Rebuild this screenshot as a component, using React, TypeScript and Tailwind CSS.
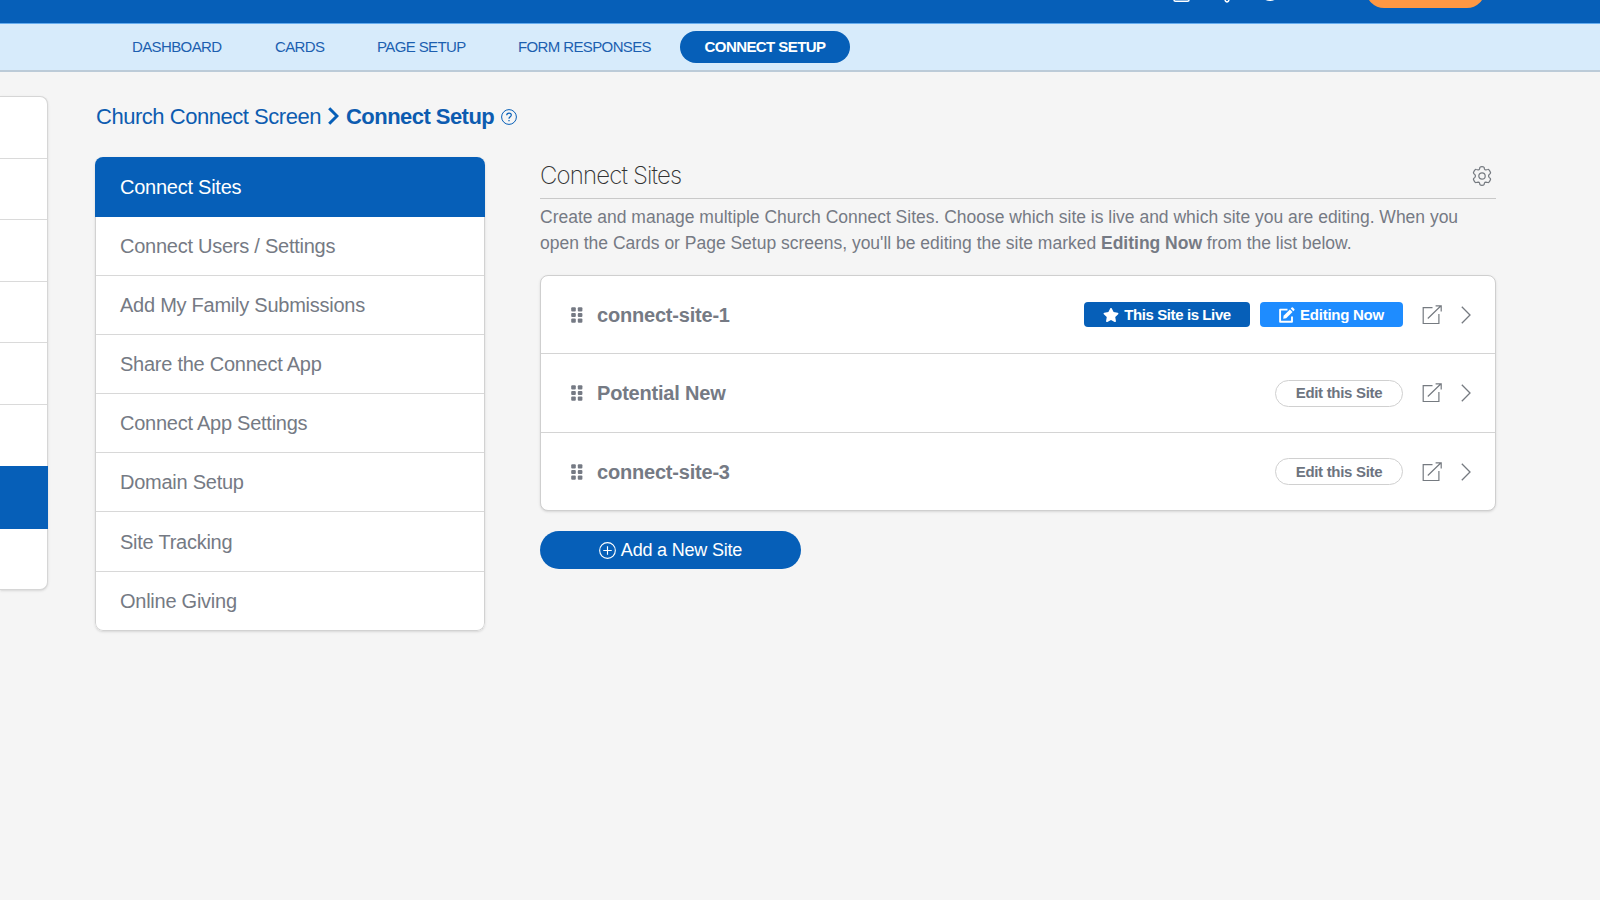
import { FaStar } from 'react-icons/fa';

const NAV_ITEMS = [
  { label: 'DASHBOARD', className: 'w-[90px] mr-[53px]' },
  { label: 'CARDS', className: 'w-[50px] mr-[52px]' },
  { label: 'PAGE SETUP', className: 'w-[89px] mr-[52px]' },
  { label: 'FORM RESPONSES', className: 'w-[133px] mr-[29px]' },
];

const MENU_ITEMS = [
  'Connect Users / Settings',
  'Add My Family Submissions',
  'Share the Connect App',
  'Connect App Settings',
  'Domain Setup',
  'Site Tracking',
  'Online Giving',
];

const SITES = [
  { name: 'connect-site-1', live: true },
  { name: 'Potential New', live: false },
  { name: 'connect-site-3', live: false },
];

function GripIcon() {
  return (
    <svg className="w-3 h-4 shrink-0" viewBox="0 0 12 16" fill="#757a84">
      {[0.2, 5.9, 11.6].map((y) => (
        <g key={y}>
          <rect x="0.2" y={y} width="4.6" height="4.2" rx="1" />
          <rect x="6.8" y={y} width="4.6" height="4.2" rx="1" />
        </g>
      ))}
    </svg>
  );
}

function EditIcon() {
  return (
    <svg className="w-4 h-4 shrink-0" viewBox="0 0 16 16">
      <path d="M8.5 2.600H1.100V14.800H13V9.500" fill="none" stroke="#fff" strokeWidth="1.900" strokeLinejoin="round" />
      <path d="M4.600 8.700 10.900 2.400 13.500 5 7.200 11.300 4.200 11.700z" fill="#fff" />
      <path d="M11.700 1.600 12.700 .6Q13.300 0 13.900 .6L15.300 2Q15.900 2.600 15.300 3.200L14.300 4.200z" fill="#fff" />
    </svg>
  );
}

function ExternalIcon() {
  return (
    <svg className="w-5 h-5 shrink-0" viewBox="0 0 20 20" fill="none" stroke="#757a80" strokeWidth="1.2">
      <path d="M10.500 2.700H1.200v15.800h15.700V8.900M5.800 13.500 19 .8M13.600 .8H19.200V6.400" />
    </svg>
  );
}

function ChevronIcon() {
  return (
    <svg className="w-2.5 h-[18px] shrink-0" viewBox="0 0 10 18" fill="none" stroke="#757a80" strokeWidth="1.3">
      <path d="M.8 .8 9 9 .8 17.2" />
    </svg>
  );
}

function GearIcon() {
  return (
    <svg className="w-5 h-5" viewBox="0 0 20 20" fill="none" stroke="#757a80" strokeWidth="1.2" strokeLinejoin="round">
      <circle cx="10" cy="10" r="3.2" />
      <path d="M7.900 1.500Q8 .9 8.700 .8 10 .6 11.300 .8 12 .9 12.100 1.500L12.500 3.100Q12.800 3.900 13.800 3.900L15.800 3.500Q16.600 3.300 17 3.900 18 5.100 18.500 6.500 18.700 7.100 18.200 7.600L17.100 8.700Q16.100 10 17.100 11.300L18.200 12.400Q18.700 12.900 18.500 13.500 18 14.900 17 16.100 16.600 16.700 15.800 16.500L13.800 16.100Q12.800 16.100 12.500 16.900L12.100 18.500Q12 19.100 11.300 19.200 10 19.400 8.700 19.200 8 19.100 7.900 18.500L7.500 16.900Q7.200 16.100 6.200 16.100L4.200 16.500Q3.400 16.700 3 16.100 2 14.900 1.500 13.500 1.300 12.900 1.800 12.400L2.900 11.300Q3.900 10 2.900 8.700L1.800 7.600Q1.300 7.100 1.500 6.500 2 5.100 3 3.900 3.400 3.300 4.200 3.500L6.200 3.900Q7.200 3.900 7.500 3.100z" />
    </svg>
  );
}

export default function App() {
  return (
    <div className="h-[900px] w-full overflow-hidden bg-[#f5f5f5] font-['Liberation_Sans',Arial,sans-serif] text-[#757a84]">
      <header className="flex h-6 justify-end overflow-hidden bg-[#065fb8] border-b border-[#65adf0] pr-[115px]">
        <svg className="w-[112px] h-2 mr-[81px]" viewBox="0 0 112 8" fill="none" stroke="#fff" strokeWidth="1.5">
          <path d="M1 -6V0Q1 1.200 2.500 1.200H14.500Q16 1.200 16 0V-6" />
          <path d="M52.500 -1a1.800 1.800 0 1 0 3 0" />
          <path d="M90 -2.500Q97 3.200 104 -2.500" />
        </svg>
        <div className="-mt-7 h-9 w-[119px] rounded-full bg-[#ff9843]"></div>
      </header>

      <nav className="flex h-12 items-center bg-[#d7ebfb] border-b-2 border-[#bccbd8] pl-[132px] text-[15px] text-[#1c5fb0]">
        {NAV_ITEMS.map((item) => (
          <a key={item.label} className={`${item.className} whitespace-nowrap tracking-[-0.62px]`}>{item.label}</a>
        ))}
        <a className="flex h-8 w-[170px] items-center justify-center rounded-full bg-[#065fb8] font-bold text-white tracking-[-0.57px]">
          CONNECT SETUP
        </a>
      </nav>

      <div className="flex items-start">
        <aside className="mt-6 w-12 h-[494px] shrink-0 rounded-r-lg border border-l-0 border-[#d6d6d6] bg-white shadow-sm">
          {[0, 1, 2, 3, 4].map((i) => (
            <div key={i} className="h-[61.500px] border-b border-[#dadada]"></div>
          ))}
          <div className="h-[61px]"></div>
          <div className="-mr-px h-[63px] bg-[#065fb8]"></div>
        </aside>

        <main className="ml-[47px] mt-[26px]">
          <h1 className="flex h-9 items-center text-[22px] text-[#0d5cb0]">
            <span className="ml-px w-[225px] whitespace-nowrap tracking-[-0.47px]">Church Connect Screen</span>
            <svg className="ml-[7px] mr-[7px] h-[18px] w-[11px]" viewBox="0 0 11 18" fill="none" stroke="#065fb8" strokeWidth="3">
              <path d="M1.200 1.200 9 9 1.200 16.800" />
            </svg>
            <span className="w-[149px] whitespace-nowrap font-bold tracking-[-0.54px]">Connect Setup</span>
            <svg className="ml-[6px] mt-0.5 h-4 w-4" viewBox="0 0 16 16" fill="none" stroke="#065fb8">
              <circle cx="8" cy="8" r="7.400" />
              <path d="M5.700 6.300Q5.800 4.200 8 4.200 10.300 4.200 10.300 6.100 10.300 7.200 9.100 7.900 8 8.500 8 9.700M8 11v1.300" strokeWidth="1.200" />
            </svg>
          </h1>

          <div className="mt-[23px] flex items-start">
            <div className="w-[390px] overflow-hidden rounded-lg bg-white text-[20px] tracking-[-0.25px] shadow-sm">
              <div className="flex h-[60px] items-center bg-[#065fb8] pl-[25px] text-white">Connect Sites</div>
              <ul className="rounded-b-lg border border-t-0 border-[#d2d2d2]">
                {MENU_ITEMS.map((item) => (
                  <li key={item} className="flex h-[59.100px] items-center border-b border-[#d8d8d8] pl-6 last:h-[58px] last:border-b-0">
                    {item}
                  </li>
                ))}
              </ul>
            </div>

            <section className="ml-[55px] w-[956px]">
              <div className="flex h-[42px] items-center justify-between border-b border-[#c9c9c9] pb-1 pr-1">
                <h2 className="font-['Inter',sans-serif] text-[24px] font-extralight tracking-[-0.85px] text-[#333]">Connect Sites</h2>
                <GearIcon />
              </div>
              <p className="mt-[5px] text-[17.500px] leading-[26px] tracking-[-0.010px] whitespace-nowrap">
                <span className="block">Create and manage multiple Church Connect Sites. Choose which site is live and which site you are editing. When you</span>
                <span className="block">open the Cards or Page Setup screens, you'll be editing the site marked <b>Editing Now</b> from the list below.</span>
              </p>

              <div className="mt-[19px] h-[236px] rounded-lg border border-[#cfcfcf] bg-white shadow-sm">
                {SITES.map((site) => (
                  <div key={site.name} className="flex h-[78.400px] items-center border-b border-[#d4d4d4] pl-[30px] pr-6 last:border-b-0">
                    <GripIcon />
                    <span className="ml-[14px] grow text-[20px] font-bold tracking-[-0.2px]">{site.name}</span>
                    {site.live ? (
                      <div className="flex gap-2.5 text-[15px] font-bold text-white">
                        <span className="flex h-[25px] w-[166px] items-center justify-center gap-[5px] rounded bg-[#065fb8] pt-px tracking-[-0.4px]">
                          <FaStar size={16} /> This Site is Live
                        </span>
                        <span className="flex h-[25px] w-[143px] items-center justify-center gap-[5px] rounded bg-[#1e8cff] pt-px tracking-[-0.25px]">
                          <EditIcon /> Editing Now
                        </span>
                      </div>
                    ) : (
                      <button className="h-[27px] w-[128px] rounded-full border border-[#d0d0d0] text-[15px] font-bold tracking-[-0.3px] text-[#6d747f]">
                        Edit this Site
                      </button>
                    )}
                    <div className="ml-[19px] flex items-center gap-[19px]">
                      <ExternalIcon />
                      <ChevronIcon />
                    </div>
                  </div>
                ))}
              </div>

              <button className="mt-5 flex h-[38px] w-[261px] items-center justify-center gap-[5px] rounded-full bg-[#065fb8] text-[18px] tracking-[-0.2px] text-white">
                <svg className="h-[17px] w-[17px]" viewBox="0 0 18 18" fill="none" stroke="currentColor" strokeWidth="1.200">
                  <circle cx="9" cy="9" r="8.300" />
                  <path d="M9 4.500v9M4.500 9h9" />
                </svg>
                Add a New Site
              </button>
            </section>
          </div>
        </main>
      </div>
    </div>
  );
}
